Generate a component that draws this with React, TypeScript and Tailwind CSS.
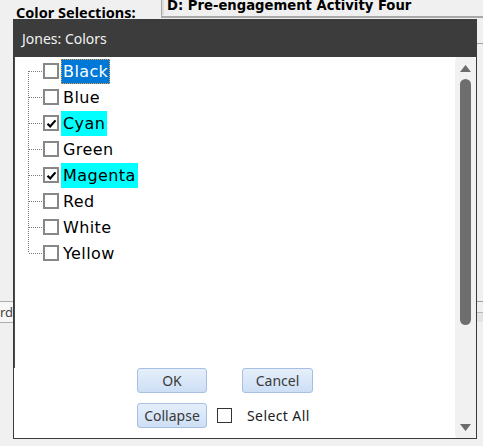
import React from "react";

type Item = { name: string; checked?: boolean; hl?: "sel" | "cyan" };

const items: Item[] = [
  { name: "Black", hl: "sel" },
  { name: "Blue" },
  { name: "Cyan", checked: true, hl: "cyan" },
  { name: "Green" },
  { name: "Magenta", checked: true, hl: "cyan" },
  { name: "Red" },
  { name: "White" },
  { name: "Yellow" },
];

function Check() {
  return (
    <svg width="11" height="11" viewBox="0 0 11 11" className="block">
      <path d="M1.5 5.8 L4.2 8.5 L9.5 2.4" fill="none" stroke="#000" strokeWidth="2.2" />
    </svg>
  );
}

function TreeRow({ item }: { item: Item }) {
  const labelCls =
    item.hl === "sel"
      ? "bg-[#0078d7] text-white outline outline-1 outline-dotted outline-[#f0a040] -outline-offset-1"
      : item.hl === "cyan"
      ? "bg-[#00ffff] text-black"
      : "text-black";
  return (
    <div className="flex h-[26px] items-center">
      <div className="ml-[28px] flex h-[16px] w-[16px] items-center justify-center border-2 border-[#878787] bg-white">
        {item.checked ? <Check /> : null}
      </div>
      <div
        className={`ml-[2px] flex h-[25px] items-center px-[2px] pt-[2px] text-[16px] leading-none tracking-[0.4px] ${labelCls}`}
        style={{ fontFamily: "'DejaVu Sans', sans-serif" }}
      >
        {item.name}
      </div>
    </div>
  );
}

function Btn({ label, w }: { label: string; w: string }) {
  return (
    <div
      className={`flex h-[25px] ${w} items-center justify-center rounded-[3px] border border-[#a6bfe3] bg-gradient-to-b from-[#e6effb] to-[#cddff5] text-[14px] text-[#3a3a3a]`}
    >
      {label}
    </div>
  );
}

export default function App() {
  return (
    <div
      className="relative h-[446px] w-[483px] overflow-hidden bg-[#f0f0f0]"
      style={{ fontFamily: "'Noto Sans', sans-serif" }}
    >
      {/* background page */}
      <div className="flex flex-col">
        <div className="flex h-[18px]">
          <div className="w-[161px] shrink-0 pl-[16px] pt-[3px] text-[14.5px] font-bold leading-[18px] text-black whitespace-nowrap">
            Color Selections:
          </div>
          <div className="h-[18px] flex-1 border-b-2 border-l border-[#a8a8a8] bg-[#f0f0f0]">
            <div className="h-full border-l-2 border-[#dcdcdc] pl-[3px]">
              <div
                className="-mt-[1px] text-[13.2px] font-bold leading-[14px] text-black whitespace-nowrap"
                style={{ fontFamily: "'DejaVu Sans', sans-serif" }}
              >
                D: Pre-engagement Activity Four
              </div>
            </div>
          </div>
        </div>
        <div className="mt-[25px] h-px w-[8px] self-end bg-[#a0a0a0]" />
        <div className="mt-[257px] flex h-[22px]">
          <div className="w-[14px] overflow-hidden border-y border-[#adadad] bg-[#f7f7f7] text-[13px] leading-[20px] text-[#444] whitespace-nowrap">
            rd
          </div>
          <div className="flex-1" />
          <div className="flex w-[8px] flex-col">
            <div className="h-[11px] border-t border-[#a0a0a0]" />
            <div className="h-[10px] border-t border-[#b8b8b8] bg-[#e4e4e8]" />
          </div>
        </div>
      </div>

      {/* dialog */}
      <div className="absolute left-[13px] top-[19px] flex h-[420px] w-[464px] flex-col">
        <div className="flex h-[38px] shrink-0 items-center bg-[#3c3c3c] pl-[9px] text-[14px] text-[#f2f2f2]">
          Jones: Colors
        </div>
        <div className="flex flex-1 border-x border-b border-[#3a3a3a] bg-white">
          <div className="flex w-[441px] flex-col">
            <div className="relative h-[311px] border-l border-[#4a4a4a] pt-[1px]">
              <svg
                className="pointer-events-none absolute left-0 top-0"
                width="40"
                height="311"
              >
                <line x1="13.5" y1="14" x2="13.5" y2="196" stroke="#7a7a7a" strokeDasharray="1 1" />
                {[0, 1, 2, 3, 4, 5, 6, 7].map((i) => (
                  <line
                    key={i}
                    x1="14"
                    y1={14.5 + 26 * i}
                    x2="27"
                    y2={14.5 + 26 * i}
                    stroke="#7a7a7a"
                    strokeDasharray="1 1"
                  />
                ))}
              </svg>
              {items.map((it) => (
                <TreeRow key={it.name} item={it} />
              ))}
            </div>
            <div className="flex flex-col gap-[10px] pl-[123px]">
              <div className="flex gap-[35px]">
                <Btn label="OK" w="w-[70px]" />
                <Btn label="Cancel" w="w-[71px]" />
              </div>
              <div className="flex items-center">
                <Btn label="Collapse" w="w-[70px]" />
                <div className="ml-[10px] h-[15px] w-[15px] border border-[#333] bg-white" />
                <div className="ml-[15px] text-[14px] tracking-[0.4px] text-[#222]">Select All</div>
              </div>
            </div>
          </div>
          <div className="flex w-[21px] flex-col items-center rounded-[4px] bg-[#f1f1f1] pb-[7px] pt-[8px]">
            <svg width="11" height="7" viewBox="0 0 11 7" className="block">
              <path d="M5.5 0 L11 7 L0 7 Z" fill="#6b6b6b" />
            </svg>
            <div className="mt-[7px] h-[246px] w-[11px] rounded-full bg-[#6e6e6e]" />
            <div className="flex-1" />
            <svg width="11" height="7" viewBox="0 0 11 7" className="block">
              <path d="M0 0 L11 0 L5.5 7 Z" fill="#6b6b6b" />
            </svg>
          </div>
        </div>
      </div>
    </div>
  );
}
